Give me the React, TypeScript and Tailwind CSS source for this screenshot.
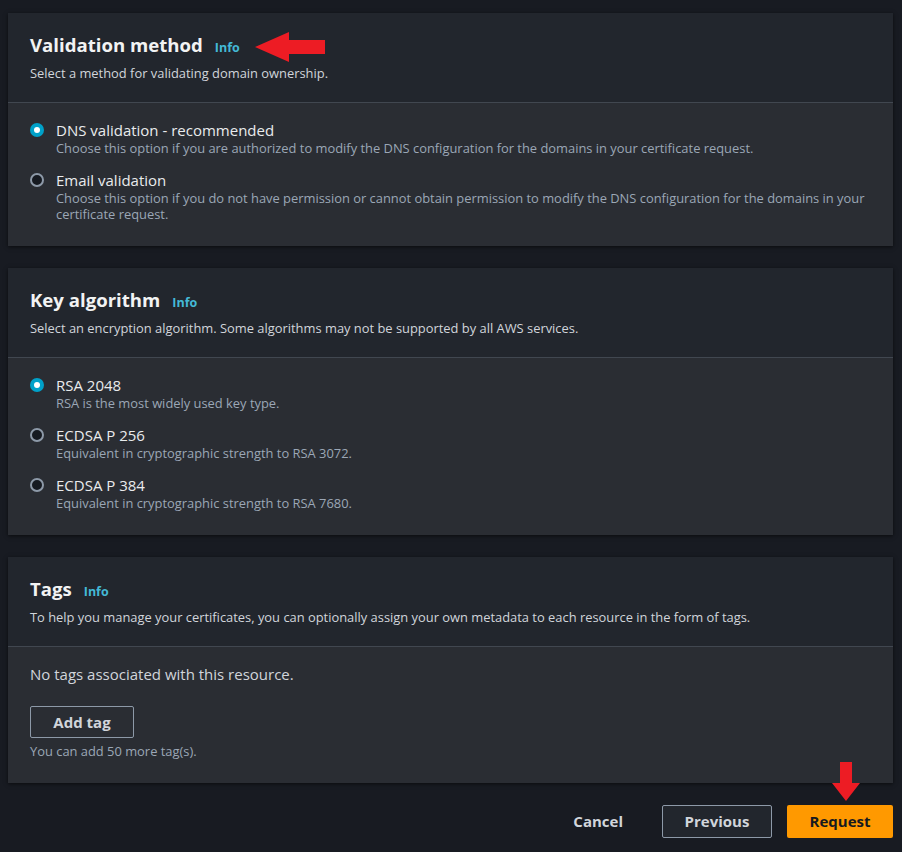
import React from "react";

const font = { fontFamily: '"Open Sans", "Noto Sans", sans-serif' };

function Info() {
  return <span className="ml-3 text-[12.5px] font-bold text-[#44b9d6]">Info</span>;
}

function Radio({ checked }: { checked?: boolean }) {
  if (checked) {
    return (
      <span className="mt-[3px] flex h-[14px] w-[14px] shrink-0 items-center justify-center rounded-full bg-[#00a1c9]">
        <span className="h-[6px] w-[6px] rounded-full bg-white" />
      </span>
    );
  }
  return (
    <span className="mt-[3px] h-[14px] w-[14px] shrink-0 rounded-full border-2 border-[#8d99a8] bg-[#161a21]" />
  );
}

function Option({ label, desc, checked }: { label: string; desc: string; checked?: boolean }) {
  return (
    <div className="flex gap-[12px]">
      <Radio checked={checked} />
      <div>
        <div className="text-[15px] leading-[20px] text-[#e9ebed]">{label}</div>
        <div className="text-[12.9px] leading-[16px] text-[#9ba7b6]">{desc}</div>
      </div>
    </div>
  );
}

function Card({ title, desc, children }: { title: string; desc: string; children: React.ReactNode }) {
  return (
    <section className="bg-[#2a2d33] shadow-[0_1px_4px_rgba(0,0,0,0.6)]">
      <div className="border-b border-[#414750] bg-[#22262d] px-[22px] pb-[21px] pt-[20px]">
        <h2 className="flex items-baseline text-[18.6px] font-bold leading-[24px] text-[#f2f3f3]">
          {title}
          <Info />
        </h2>
        <p className="mt-[5px] text-[12.9px] leading-[16px] text-[#d1d5db]">{desc}</p>
      </div>
      <div className="px-[22px] pb-[24px] pt-[17px]">{children}</div>
    </section>
  );
}

export default function App() {
  return (
    <div className="relative min-h-[852px] bg-[#181b22] pl-[8px] pr-[9px] pt-[13px]" style={font}>
      <div className="flex flex-col gap-[22px]">
        <Card title="Validation method" desc="Select a method for validating domain ownership.">
          <div className="flex flex-col gap-[14px]">
            <Option
              checked
              label="DNS validation - recommended"
              desc="Choose this option if you are authorized to modify the DNS configuration for the domains in your certificate request."
            />
            <Option
              label="Email validation"
              desc="Choose this option if you do not have permission or cannot obtain permission to modify the DNS configuration for the domains in your certificate request."
            />
          </div>
        </Card>

        <Card
          title="Key algorithm"
          desc="Select an encryption algorithm. Some algorithms may not be supported by all AWS services."
        >
          <div className="flex flex-col gap-[14px]">
            <Option checked label="RSA 2048" desc="RSA is the most widely used key type." />
            <Option label="ECDSA P 256" desc="Equivalent in cryptographic strength to RSA 3072." />
            <Option label="ECDSA P 384" desc="Equivalent in cryptographic strength to RSA 7680." />
          </div>
        </Card>

        <Card
          title="Tags"
          desc="To help you manage your certificates, you can optionally assign your own metadata to each resource in the form of tags."
        >
          <p className="text-[15px] leading-[20px] text-[#d1d5db]">No tags associated with this resource.</p>
          <button className="mt-[22px] h-[32px] w-[104px] rounded-[2px] border border-[#8d99a8] text-[15px] font-bold text-[#d1d5db]">
            Add tag
          </button>
          <p className="mt-[5px] text-[12.9px] leading-[16px] text-[#9ba7b6]">You can add 50 more tag(s).</p>
        </Card>
      </div>

      <div className="mt-[22px] flex items-center justify-end">
        <button className="mr-[39px] text-[15px] font-bold text-[#d1d5db]">Cancel</button>
        <button className="mr-[15px] h-[33px] w-[110px] rounded-[2px] border border-[#8d99a8] bg-[#22262d] text-[15px] font-bold text-[#d1d5db]">
          Previous
        </button>
        <button className="h-[33px] w-[106px] rounded-[2px] bg-[#ff9900] text-[15px] font-bold text-[#16191f]">
          Request
        </button>
      </div>

      {/* annotation arrows */}
      <svg className="absolute left-[255px] top-[32px]" width="71" height="31" viewBox="0 0 71 31">
        <polygon points="0,15 34,0 34,8 70,8 70,22 34,22 34,30" fill="#ed1c24" />
      </svg>
      <svg className="absolute left-[832px] top-[762px]" width="29" height="40" viewBox="0 0 29 40">
        <polygon points="8,0 20,0 20,21 28,21 14,39 0,21 8,21" fill="#ed1c24" />
      </svg>
    </div>
  );
}
